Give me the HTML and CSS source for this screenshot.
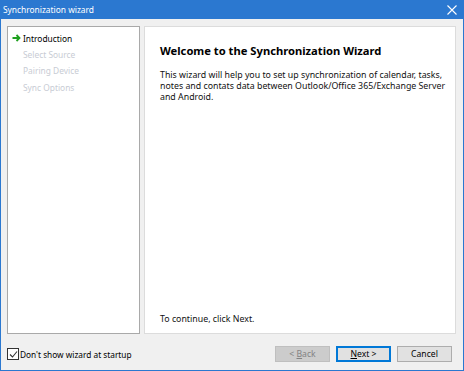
FILE: index.html
```html
<!DOCTYPE html>
<html>
<head>
<meta charset="utf-8">
<link rel="stylesheet" href="styles.css">
</head>
<body>
<div class="window">
  <div class="titlebar">
    <span class="title">Synchronization wizard</span>
    <svg class="close" width="10" height="10" viewBox="0 0 10 10"><path d="M0.5 0.5 L9.5 9.5 M9.5 0.5 L0.5 9.5" stroke="#fff" stroke-width="1.1" fill="none"/></svg>
  </div>
  <div class="main">
    <div class="steps">
      <div class="step active">
        <svg class="arrow" width="9" height="8" viewBox="0 0 9 8"><path d="M0.5 4 H7.5 M4.5 1 L7.5 4 L4.5 7" stroke="#1fa01f" stroke-width="1.8" fill="none"/></svg>
        <span>Introduction</span>
      </div>
      <div class="step">Select Source</div>
      <div class="step">Pairing Device</div>
      <div class="step">Sync Options</div>
    </div>
    <div class="page">
      <h1 class="heading">Welcome to the Synchronization Wizard</h1>
      <p class="text">This wizard will help you to set up synchronization of calendar, tasks, notes and contats data between Outlook/Office 365/Exchange Server and Android.</p>
      <p class="hint">To continue, click Next.</p>
    </div>
  </div>
  <div class="footer">
    <label class="check">
      <span class="box"><svg width="9" height="9" viewBox="0 0 9 9"><path d="M1 4.5 L3.5 7 L8 1.5" stroke="#333" stroke-width="1.1" fill="none"/></svg></span>
      <span>Don't show wizard at startup</span>
    </label>
    <div class="buttons">
      <button class="btn disabled">&lt; <u>B</u>ack</button>
      <button class="btn default"><u>N</u>ext &gt;</button>
      <button class="btn">Cancel</button>
    </div>
  </div>
</div>
</body>
</html>
```
FILE: styles.css
```css
* { box-sizing: border-box; }
html, body { margin: 0; padding: 0; }
body {
  width: 464px;
  height: 371px;
  font-family: "Noto Sans", "Open Sans", sans-serif;
  font-size: 9px;
  color: #000;
}
.window {
  width: 464px;
  height: 371px;
  display: flex;
  flex-direction: column;
  background: #f0f0f0;
  border: 1px solid #2b78d0;
  border-top: none;
}
.titlebar {
  height: 19px;
  margin: 0 -1px;
  background: #2b78d0;
  color: #fff;
  display: flex;
  align-items: center;
  justify-content: space-between;
  padding: 0 7px 0 3px;
}
.title { font-size: 8.4px; }
.close { display: block; }
.main {
  display: flex;
  gap: 4px;
  padding: 7px 7px 0 6px;
  height: 315px;
}
.steps {
  width: 133px;
  height: 308px;
  background: #fff;
  border: 1px solid #a9a9a9;
  padding: 3px 0 0 4px;
  font-size: 8.4px;
}
.step {
  height: 16.4px;
  display: flex;
  align-items: center;
  color: #c8ccd4;
  padding-left: 11px;
}
.step.active { color: #000; padding-left: 0; }
.arrow { margin: 0 2px 0 0; }
.page {
  flex: 1;
  height: 308px;
  background: #fff;
  border: 1px solid #dcdcdc;
  padding: 16px 6px 0 15px;
  display: flex;
  flex-direction: column;
}
.heading {
  margin: 0 0 12px;
  font-size: 11.2px;
  font-weight: bold;
}
.text {
  margin: 0;
  font-size: 8.8px;
  line-height: 11px;
  color: #111;
}
.hint {
  margin: auto 0 8px;
  font-size: 8.8px;
  color: #111;
}
.footer {
  flex: 1;
  display: flex;
  align-items: center;
  justify-content: space-between;
  padding: 4px 11px 0 6px;
  font-size: 8.3px;
}
.check {
  display: flex;
  align-items: center;
  gap: 1px;
}
.box {
  width: 12px;
  height: 12px;
  border: 1px solid #333;
  background: #fff;
  display: flex;
  align-items: center;
  justify-content: center;
}
.buttons {
  display: flex;
  gap: 6px;
}
.btn {
  width: 55px;
  height: 16px;
  font-family: inherit;
  font-size: 8.6px;
  padding: 0;
  background: #e1e1e1;
  border: 1px solid #adadad;
  color: #000;
}
.btn.disabled { background: #cccccc; border-color: #bfbfbf; color: #838383; }
.btn.default { border: 1px solid #0078d7; box-shadow: inset 0 0 0 1px #0078d7; }
```
